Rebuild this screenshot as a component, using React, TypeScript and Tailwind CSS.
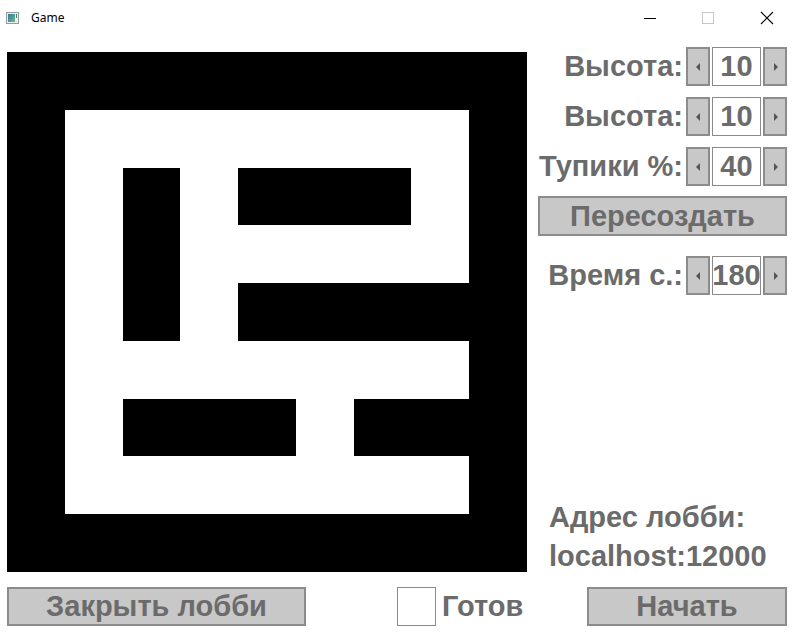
import React from "react";

// 9x9 maze, 1 = wall
const maze = [
  "111111111",
  "100000001",
  "101011101",
  "101000001",
  "101011111",
  "100000001",
  "101110111",
  "100000001",
  "111111111",
];

function Arrow({dir}: {dir: "left" | "right"}) {
  return (
    <svg width="5" height="8" viewBox="0 0 5 8" className="block">
      {dir === "left" ? <path d="M4 0v8L0 4z" fill="#555"/> : <path d="M1 0v8l4-4z" fill="#555"/>}
    </svg>
  )
}

function Spinner({label, value}: {label: string, value: string}) {
  return (
    <div className="flex items-center h-[39px]">
      <div className="flex-1 text-right pr-[3px] text-[29px] font-bold text-[#6b6b6b] leading-none whitespace-nowrap">{label}</div>
      <div className="flex h-[39px] gap-[2px]">
        <div className="w-[24px] h-full bg-[#c8c8c8] border-2 border-[#8c8c8c] flex items-center justify-center">
          <Arrow dir="left"/>
        </div>
        <div className="w-[49px] h-full bg-white border border-[#8a8a8a] flex items-center justify-center text-[29px] font-bold text-[#6b6b6b] leading-none">
          {value}
        </div>
        <div className="w-[24px] h-full bg-[#c8c8c8] border-2 border-[#8c8c8c] flex items-center justify-center">
          <Arrow dir="right"/>
        </div>
      </div>
    </div>
  )
}

function GrayButton({children, className}: {children: React.ReactNode, className: string}) {
  return (
    <button
      type="button"
      className={"bg-[#c8c8c8] border-2 border-[#8c8c8c] text-[29px] font-bold text-[#6b6b6b] leading-none flex items-center justify-center " + className}
    >
      {children}
    </button>
  )
}

export default function App() {
  return (
    <div className="w-[794px] h-[634px] bg-white overflow-hidden flex flex-col" style={{fontFamily: '"Liberation Sans", Arial, sans-serif'}}>
      {/* title bar */}
      <div className="h-[31px] flex items-center pt-[5px]">
        <div className="ml-[6px] w-[13px] h-[12px] border border-[#9a9a9a] bg-[#e8eef0] flex p-[1px] gap-[1px]">
          <div className="w-[7px] h-full bg-gradient-to-br from-[#2f7fa0] to-[#6fb58a]"/>
          <div className="w-[1px] h-[4px] bg-[#3d8a6a]"/>
        </div>
        <div className="ml-[12px] text-[12px] text-black" style={{fontFamily: '"Noto Sans", "Open Sans", sans-serif'}}>Game</div>
        <div className="flex-1"/>
        <div className="w-[46px] h-[26px] flex items-center justify-center">
          <svg width="12" height="12" viewBox="0 0 12 12"><path d="M0 6.5h13" stroke="#000" strokeWidth="1"/></svg>
        </div>
        <div className="w-[46px] h-[26px] flex items-center justify-center ml-[12px]">
          <svg width="12" height="12" viewBox="0 0 12 12"><rect x="0.5" y="0.5" width="11" height="11" fill="none" stroke="#c8c8c8"/></svg>
        </div>
        <div className="w-[46px] h-[26px] flex items-center justify-center ml-[13px] mr-[4px]">
          <svg width="14" height="14" viewBox="0 0 14 14"><path d="M1 1l12 12M13 1L1 13" stroke="#000" strokeWidth="1.1"/></svg>
        </div>
      </div>

      {/* main */}
      <div className="h-[556px] flex px-[7px]">
        <div className="w-[520px] h-[520px] mt-[21px] grid grid-cols-9 grid-rows-9">
          {maze.map((row, r) =>
            row.split("").map((c, i) => (
              <div key={r + "-" + i} className={c === "1" ? "bg-black" : "bg-white"}/>
            ))
          )}
        </div>
        <div className="w-[249px] ml-[11px] pt-[16px] flex flex-col">
          <Spinner label="Высота:" value="10"/>
          <div className="h-[11px]"/>
          <Spinner label="Высота:" value="10"/>
          <div className="h-[11px]"/>
          <Spinner label="Тупики %:" value="40"/>
          <div className="h-[10px]"/>
          <GrayButton className="h-[40px] w-full">Пересоздать</GrayButton>
          <div className="h-[20px]"/>
          <Spinner label="Время с.:" value="180"/>
          <div className="flex-1"/>
          <div className="pl-[11px] pb-[11px] text-[29px] font-bold text-[#6b6b6b] leading-[39px]">
            <div>Адрес лобби:</div>
            <div>localhost:12000</div>
          </div>
        </div>
      </div>

      {/* bottom */}
      <div className="h-[39px] flex items-center px-[7px]">
        <GrayButton className="w-[299px] h-[39px]">Закрыть лобби</GrayButton>
        <div className="ml-[91px] w-[39px] h-[39px] bg-white border border-[#8a8a8a]"/>
        <div className="ml-[6px] text-[29px] font-bold text-[#6b6b6b] leading-none">Готов</div>
        <div className="flex-1"/>
        <GrayButton className="w-[200px] h-[39px]">Начать</GrayButton>
      </div>
    </div>
  )
}
